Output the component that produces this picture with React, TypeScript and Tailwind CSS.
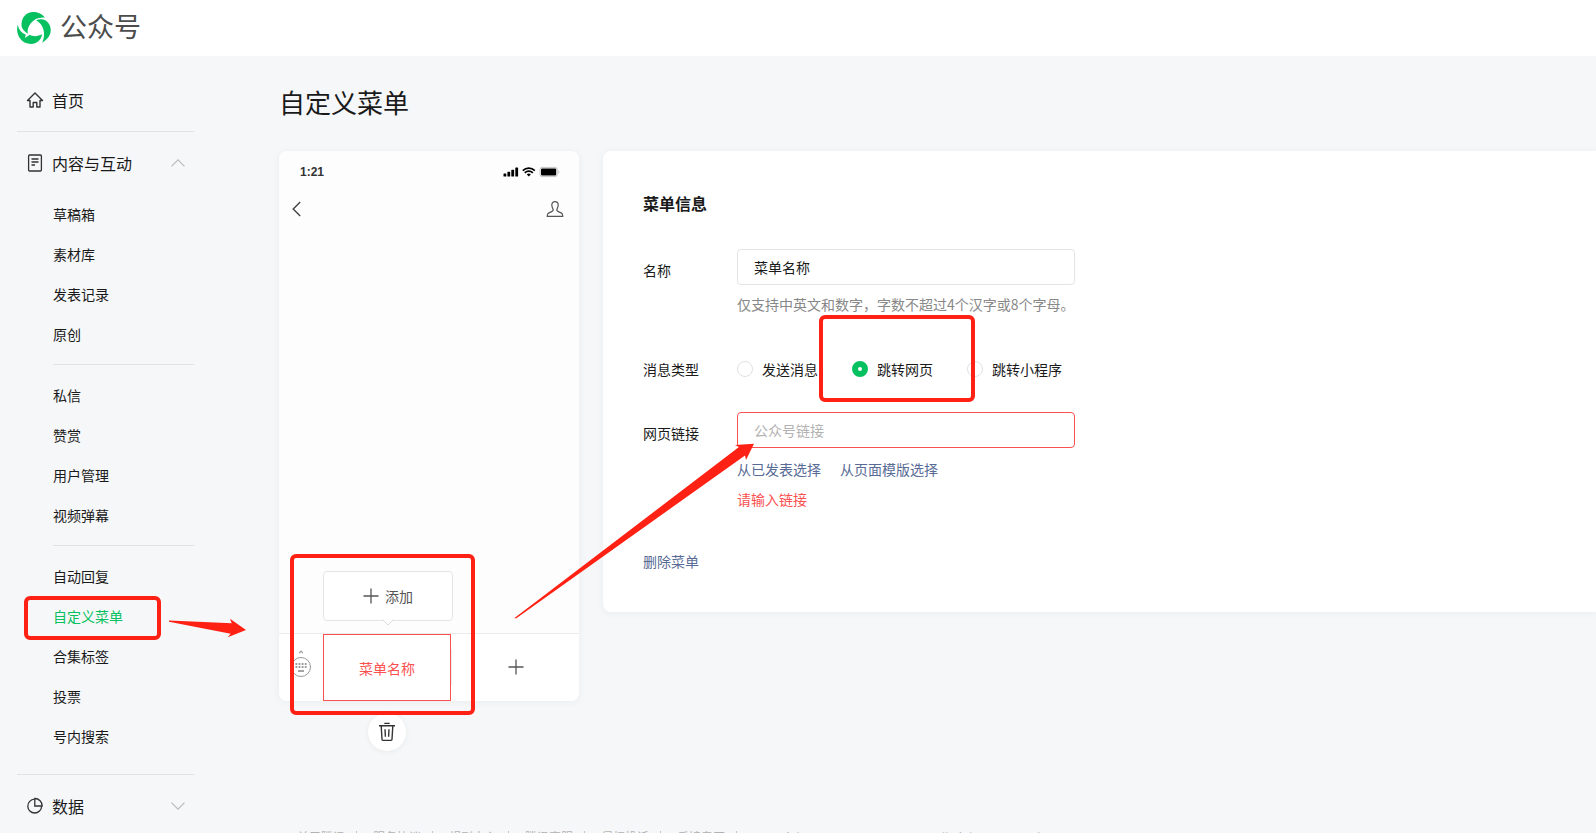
import { useState } from "react"
import type { ReactNode } from "react"

type MessageType = "message" | "page" | "miniprogram"

const navGroups = [
  ["草稿箱", "素材库", "发表记录", "原创"],
  ["私信", "赞赏", "用户管理", "视频弹幕"],
  ["自动回复", "自定义菜单", "合集标签", "投票", "号内搜索"],
]

const messageTypes: { value: MessageType; label: string }[] = [
  { value: "message", label: "发送消息" },
  { value: "page", label: "跳转网页" },
  { value: "miniprogram", label: "跳转小程序" },
]

const footerLinks = ["关于腾讯", "服务协议", "规则中心", "腾讯客服", "侵权投诉", "反馈专区"]

function Logo() {
  return (
    <svg viewBox="0 0 101 96" className="h-8 w-[34px] fill-[#07c160]">
      <path d="M13 42C12 15 28 0 48 0C65 0 77 8 83 17C64 15 50 22 41 34C33 44 30 54 32 65C22 59 15 51 13 42Z" />
      <path d="M57 25C72 18 89 23 97 38C105 55 101 78 75 92C84 72 85 42 57 25Z" />
      <path d="M2 38C-6 62 8 96 42 96C59 96 72 84 75 67C62 74 47 74 38 68L23 78L26 68C12 62 4 52 2 38Z" />
    </svg>
  )
}

function HomeIcon() {
  return (
    <svg viewBox="0 0 18 18" className="size-[18px] fill-none stroke-[#333]" strokeWidth="1.4" strokeLinejoin="round">
      <path d="M9 2L1.5 9.5H4V16H7.2V11.5H10.8V16H14V9.5H16.5Z" />
    </svg>
  )
}

function DocIcon() {
  return (
    <svg viewBox="0 0 18 18" className="size-[18px] fill-none stroke-[#333]" strokeWidth="1.3">
      <rect x="2.6" y="1" width="12.8" height="16" rx="1" />
      <path d="M5.5 5H12.5M5.5 8H12.5M5.5 11H9" />
    </svg>
  )
}

function PieIcon() {
  return (
    <svg viewBox="0 0 18 18" className="size-[18px] fill-none stroke-[#333]" strokeWidth="1.3">
      <path d="M8.5 2.2A6.9 6.9 0 1 0 15.6 9.2" />
      <path d="M8.8 1.5V9H16.2A7.3 7.3 0 0 0 8.8 1.5Z" />
    </svg>
  )
}

function Chevron({ up = false }: { up?: boolean }) {
  return (
    <svg viewBox="0 0 14 8" className="ml-auto mr-[9px] h-2 w-3.5 fill-none stroke-[#b8b9bb]" strokeWidth="1.1">
      <path d={up ? "M0.5 7.3L7 0.8L13.5 7.3" : "M0.5 0.7L7 7.2L13.5 0.7"} />
    </svg>
  )
}

function PlusIcon() {
  return (
    <svg viewBox="0 0 16 16" className="size-4 fill-none stroke-[#555]" strokeWidth="1.3">
      <path d="M8 0.5V15.5M0.5 8H15.5" />
    </svg>
  )
}

function StatusIcons() {
  return (
    <svg viewBox="0 0 58 12" className="h-3 w-[58px]">
      <g className="fill-black">
        <rect x="0.5" y="7.5" width="2.8" height="3" rx="0.6" />
        <rect x="4.4" y="5.8" width="2.8" height="4.7" rx="0.6" />
        <rect x="8.3" y="3.8" width="2.8" height="6.7" rx="0.6" />
        <rect x="12.3" y="1.5" width="2.8" height="9" rx="0.6" />
        <path d="M25.8 10.5L23.8 8.4A2.9 2.9 0 0 1 27.8 8.4Z" />
        <rect x="38" y="2.6" width="15.2" height="6.8" rx="1" />
      </g>
      <g className="fill-none stroke-black" strokeWidth="1.7">
        <path d="M19.8 4.6A8.6 8.6 0 0 1 31.8 4.6" />
        <path d="M21.8 6.8A5.7 5.7 0 0 1 29.8 6.8" />
      </g>
      <rect x="37" y="1.4" width="17.2" height="9.2" rx="2.2" className="fill-none stroke-[#c4c4c4]" />
      <path d="M55.4 4.3V7.7C56.8 7.2 56.8 4.8 55.4 4.3Z" className="fill-[#c4c4c4]" />
    </svg>
  )
}

function PersonIcon() {
  return (
    <svg viewBox="0 0 18 18" className="size-[18px] fill-none stroke-[#555]" strokeWidth="1.2" strokeLinejoin="round">
      <path d="M9 1.6C6.9 1.6 5.8 3 5.8 5C5.8 7 6.7 8.3 7.1 9.4C7.5 10.8 6.5 11.4 5.2 11.9L2.8 12.9C1.6 13.4 1.2 14 1.2 16.4H16.8C16.8 14 16.4 13.4 15.2 12.9L12.8 11.9C11.5 11.4 10.5 10.8 10.9 9.4C11.3 8.3 12.2 7 12.2 5C12.2 3 11.1 1.6 9 1.6Z" />
    </svg>
  )
}

function KeyboardIcon() {
  return (
    <svg viewBox="0 0 22 28" className="h-7 w-[22px] fill-none stroke-[#9a9a9a]">
      <path d="M9.2 3.2L11 1.2L12.8 3.2" strokeWidth="1.2" />
      <circle cx="11" cy="17" r="9.5" />
      <path d="M5.5 14H17M5.5 17H17" strokeWidth="1.8" strokeDasharray="1.8 1.3" />
      <path d="M8 21H14" strokeWidth="1.8" />
    </svg>
  )
}

function TrashIcon() {
  return (
    <svg viewBox="0 0 18 20" className="h-5 w-[18px] fill-none stroke-[#333]" strokeWidth="1.4">
      <path d="M1 3.7H17M6.3 1.4H11.7M3.2 4L4 17.2Q4.1 18.4 5.3 18.4H12.7Q13.9 18.4 14 17.2L14.8 4M7 7.2L7.4 14.8M11 7.2L10.6 14.8" />
    </svg>
  )
}

/* Red frame drawn over a part of the page that needs attention */
function Highlight({ className }: { className: string }) {
  return <div className={`pointer-events-none absolute z-10 rounded-md border-4 border-[#ff2113] ${className}`} />
}

function NavHeading({ icon, children, chevron }: { icon: ReactNode; children: ReactNode; chevron?: ReactNode }) {
  return (
    <a href="#" className="flex h-6 items-center gap-2 pl-[9px] text-base leading-6">
      {icon}
      {children}
      {chevron}
    </a>
  )
}

function Sidebar() {
  return (
    <aside className="w-[194px] shrink-0 pl-[17px] pt-8">
      <nav>
        <NavHeading icon={<HomeIcon />}>首页</NavHeading>
        <hr className="mt-[19px] border-[#e1e2e4]" />
        <div className="mt-[19px]">
          <NavHeading icon={<DocIcon />} chevron={<Chevron up />}>
            内容与互动
          </NavHeading>
        </div>
        <div className="ml-9 pt-[19px]">
          {navGroups.map((group, i) => (
            <div key={group[0]}>
              {i > 0 && <hr className="my-2.5 border-[#e1e2e4]" />}
              <ul className="text-sm">
                {group.map((item) => (
                  <li key={item} className="relative flex h-10 items-center">
                    <a href="#" className={item === "自定义菜单" ? "text-[#07c160]" : ""}>
                      {item}
                    </a>
                    {item === "自定义菜单" && (
                      <>
                        <Highlight className="-left-[29px] top-0 h-11 w-[137px]" />
                        <svg
                          viewBox="0 0 78 20"
                          className="pointer-events-none absolute left-[116px] top-[22px] z-10 h-5 w-[78px] fill-[#ff2113]"
                        >
                          <path d="M0 2.5L62.7 5.3L61 0.7L77 12L58.7 19.3L61.7 15.7L0 3.7Z" />
                        </svg>
                      </>
                    )}
                  </li>
                ))}
              </ul>
            </div>
          ))}
        </div>
        <hr className="mb-[19px] mt-[18px] border-[#e1e2e4]" />
        <NavHeading icon={<PieIcon />} chevron={<Chevron />}>
          数据
        </NavHeading>
      </nav>
    </aside>
  )
}

function PhonePreview({ name }: { name: string }) {
  return (
    <div className="relative w-[300px] shrink-0">
      <div className="flex h-[550px] flex-col rounded-lg bg-[#fdfdfd] shadow-[0_1px_8px_rgba(0,0,0,0.05)]">
        <div className="flex h-[42px] items-center justify-between pl-[21px] pr-[18px]">
          <span className="font-['Liberation_Sans'] text-xs font-bold text-[#333]">1:21</span>
          <StatusIcons />
        </div>
        <div className="flex h-8 items-center justify-between pl-[13px] pr-[15px]">
          <svg viewBox="0 0 9 16" className="h-4 w-[9px] fill-none stroke-[#444]" strokeWidth="1.4">
            <path d="M8.2 1L1.2 8L8.2 15" />
          </svg>
          <PersonIcon />
        </div>
        <div className="mt-auto flex h-[68px] items-center rounded-b-lg border-t border-[#ebebeb] bg-white">
          <div className="flex w-11 justify-center pb-2">
            <KeyboardIcon />
          </div>
          <div className="relative h-[67px] w-32">
            <button type="button" className="size-full border border-[#fa5151] text-sm text-[#fa5151]">
              {name}
            </button>
            <button
              type="button"
              className="absolute bottom-[80px] left-0 flex h-[50px] w-[130px] items-center justify-center gap-1.5 rounded border border-[#e4e4e4] bg-white text-sm text-[#555]"
            >
              <PlusIcon />
              添加
              <svg viewBox="0 0 12 7" className="absolute -bottom-1.5 left-[58px] h-[7px] w-3 fill-white stroke-[#dcdcdc]">
                <path d="M0.5 0.5L6 6L11.5 0.5" />
              </svg>
            </button>
            <Highlight className="-left-[33px] bottom-[-14px] h-[161px] w-[185px]" />
            {/* Arrow from the menu item to the link field */}
            <svg
              viewBox="0 0 242 176"
              className="pointer-events-none absolute bottom-[82px] left-[191px] z-10 h-44 w-[242px] fill-[#ff2113]"
            >
              <path d="M0.5 175L225 4L221 2L240 0.7L232 17L231 12.4L2 175.6Z" />
            </svg>
          </div>
          <button type="button" aria-label="添加菜单" className="mb-0.5 flex h-9 flex-1 items-center justify-center border-l border-[#ececec]">
            <PlusIcon />
          </button>
        </div>
      </div>
      <button
        type="button"
        aria-label="删除"
        className="ml-[89px] mt-3 flex size-[38px] items-center justify-center rounded-full bg-white shadow-[0_1px_6px_rgba(0,0,0,0.06)]"
      >
        <TrashIcon />
      </button>
    </div>
  )
}

function MenuForm({ name, onNameChange }: { name: string; onNameChange: (value: string) => void }) {
  const [messageType, setMessageType] = useState<MessageType>("page")
  const [link, setLink] = useState("")

  return (
    <section className="h-[461px] flex-1 rounded-l-lg bg-white px-10 pt-10 shadow-[0_1px_8px_rgba(0,0,0,0.05)]">
      <h2 className="text-base font-bold leading-6">菜单信息</h2>

      <form className="mt-[34px] text-sm leading-6">
        <div className="flex">
          <label htmlFor="menu-name" className="w-[94px] shrink-0 pt-[9px]">
            名称
          </label>
          <div>
            <input
              id="menu-name"
              value={name}
              onChange={(e) => onNameChange(e.target.value)}
              className="block h-9 w-[338px] rounded border border-[#e4e4e4] px-4 outline-none"
            />
            <p className="mt-[7px] text-[#888]">仅支持中英文和数字，字数不超过4个汉字或8个字母。</p>
          </div>
        </div>

        <fieldset className="mt-[41px] flex">
          <legend className="float-left w-[94px]">消息类型</legend>
          <div className="relative flex">
            {messageTypes.map(({ value, label }) => (
              <label key={value} className="flex w-[115px] items-center gap-[9px] whitespace-nowrap">
                <input
                  type="radio"
                  name="message-type"
                  value={value}
                  checked={messageType === value}
                  onChange={() => setMessageType(value)}
                  className="size-4 shrink-0 appearance-none rounded-full border border-[#e1e1e1] bg-white checked:border-[6px] checked:border-[#07c160]"
                />
                {label}
              </label>
            ))}
            <Highlight className="-top-[42px] left-[82px] h-[87px] w-[156px]" />
          </div>
        </fieldset>

        <div className="mt-[31px] flex">
          <label htmlFor="menu-link" className="w-[94px] shrink-0 pt-[9px]">
            网页链接
          </label>
          <div>
            <input
              id="menu-link"
              value={link}
              onChange={(e) => setLink(e.target.value)}
              placeholder="公众号链接"
              className="block h-9 w-[338px] rounded border border-[#fa5151] px-4 outline-none placeholder:text-[#b2b2b2]"
            />
            <div className="mt-[9px] flex gap-[19px] text-[#576b95]">
              <a href="#">从已发表选择</a>
              <a href="#">从页面模版选择</a>
            </div>
            <p className="mt-1.5 text-[#fa5151]">请输入链接</p>
          </div>
        </div>

        <button type="button" className="mt-[38px] text-[#576b95]">
          删除菜单
        </button>
      </form>
    </section>
  )
}

export default function App() {
  const [name, setName] = useState("菜单名称")

  return (
    <div className="h-screen overflow-hidden bg-[#f6f7f9] font-['Noto_Sans_CJK_SC',sans-serif] text-[#1a1a1a]">
      <header className="flex h-14 items-center gap-[9px] bg-white pl-[17px] text-[27px] leading-8 text-[#4c4c4c]">
        <Logo />
        <span className="pb-1">公众号</span>
      </header>

      <div className="flex gap-[85px]">
        <Sidebar />
        <main className="min-w-0 flex-1 pt-[26px]">
          <h1 className="text-[26px] leading-10">自定义菜单</h1>
          <div className="mt-[29px] flex items-start gap-6">
            <PhonePreview name={name} />
            <MenuForm name={name} onNameChange={setName} />
          </div>
          <footer className="mt-[76px] flex items-center pl-[18px] text-xs leading-5 text-[#b2b2b2]">
            {footerLinks.map((item) => (
              <div key={item} className="flex items-center">
                <a href="#">{item}</a>
                <span className="ml-[11px] mr-4 h-3 w-px bg-[#c4c4c4]" />
              </div>
            ))}
            <span>Copyright © 2012-2023 Tencent. All Rights Reserved.</span>
          </footer>
        </main>
      </div>
    </div>
  )
}
